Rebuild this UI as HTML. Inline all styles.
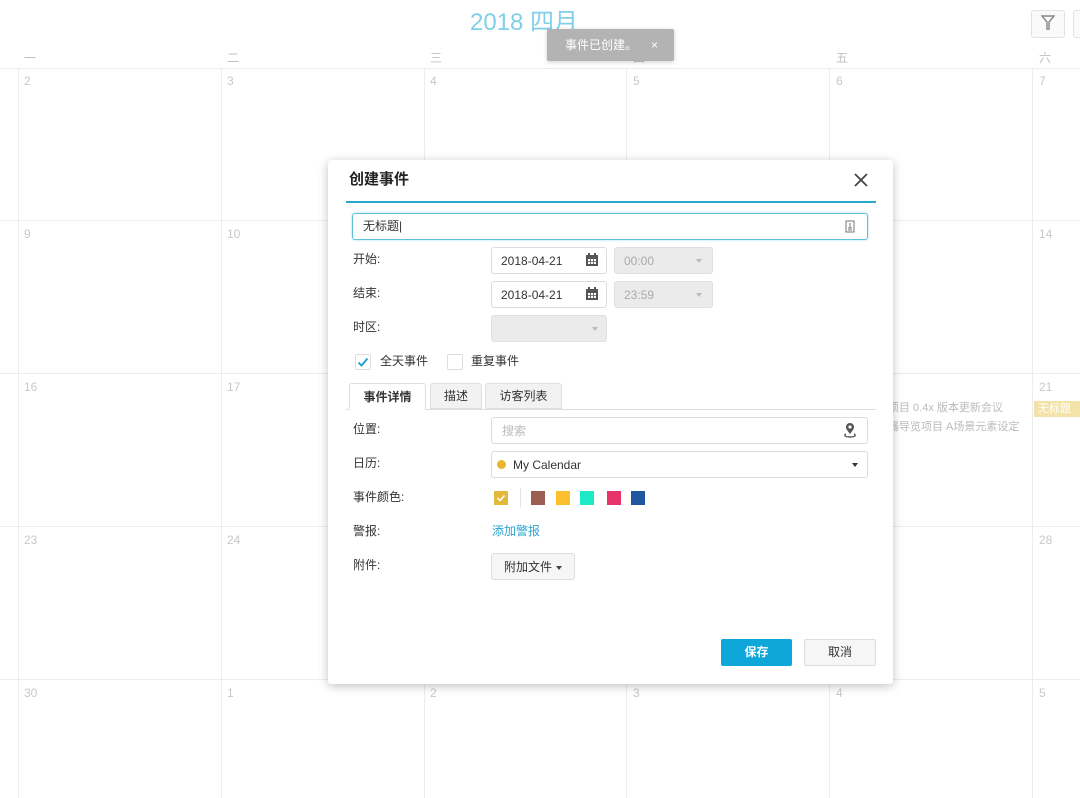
<!DOCTYPE html>
<html><head><meta charset="utf-8"><style>
*{box-sizing:border-box;margin:0;padding:0}
body{width:1080px;height:798px;overflow:hidden;background:#fff;position:relative;font-family:"Liberation Sans","Noto Sans CJK SC",sans-serif;font-size:12px;color:#333;line-height:1.2}
.a{position:absolute}
.vl{position:absolute;top:68px;bottom:0;width:1px;background:#ececec}
.hl{position:absolute;left:0;right:0;height:1px;background:#ececec}
.dn{position:absolute;color:#c8c8c8;font-size:12px}
.wd{position:absolute;top:51px;color:#c0c0c0;font-size:12px}
.lbl{position:absolute;left:353px;font-size:12px;color:#333}
.box{position:absolute;border:1px solid #dcdcdc;border-radius:3px;background:#fff}
.dis{position:absolute;border:1px solid #e0e0e0;border-radius:3px;background:#ebebeb;color:#aaa}
.car{position:absolute;width:0;height:0;border-left:3.5px solid transparent;border-right:3.5px solid transparent;border-top:4px solid #bbb}
.sw{position:absolute;top:491px;width:14px;height:14px}
</style></head><body>
<div class="a" style="left:470px;top:9px;font-size:24px;color:#7fd0e8">2018 四月</div>
<div class="a" style="left:1031px;top:10px;width:34px;height:28px;border:1px solid #e3e3e3;border-radius:3px;background:#fafafa"></div>
<svg class="a" style="left:1041px;top:15px" width="14" height="16" viewBox="0 0 14 16"><path d="M1 1h12L8 7v7H6V7z" fill="none" stroke="#888" stroke-width="1.4"/></svg>
<div class="a" style="left:1073px;top:10px;width:10px;height:28px;border:1px solid #e3e3e3;border-radius:3px;background:#fafafa"></div>
<div class="wd" style="left:24px">一</div><div class="wd" style="left:227px">二</div><div class="wd" style="left:430px">三</div><div class="wd" style="left:633px">四</div><div class="wd" style="left:836px">五</div><div class="wd" style="left:1039px">六</div>
<div class="hl" style="top:68px"></div><div class="hl" style="top:220px"></div><div class="hl" style="top:373px"></div><div class="hl" style="top:526px"></div><div class="hl" style="top:679px"></div>
<div class="vl" style="left:18px"></div><div class="vl" style="left:221px"></div><div class="vl" style="left:424px"></div><div class="vl" style="left:626px"></div><div class="vl" style="left:829px"></div><div class="vl" style="left:1032px"></div>
<div class="dn" style="left:24px;top:74px">2</div><div class="dn" style="left:227px;top:74px">3</div><div class="dn" style="left:430px;top:74px">4</div><div class="dn" style="left:633px;top:74px">5</div><div class="dn" style="left:836px;top:74px">6</div><div class="dn" style="left:1039px;top:74px">7</div>
<div class="dn" style="left:24px;top:227px">9</div><div class="dn" style="left:227px;top:227px">10</div><div class="dn" style="left:1039px;top:227px">14</div>
<div class="dn" style="left:24px;top:380px">16</div><div class="dn" style="left:227px;top:380px">17</div><div class="dn" style="left:1039px;top:380px">21</div>
<div class="dn" style="left:24px;top:533px">23</div><div class="dn" style="left:227px;top:533px">24</div><div class="dn" style="left:1039px;top:533px">28</div>
<div class="dn" style="left:24px;top:686px">30</div><div class="dn" style="left:227px;top:686px">1</div><div class="dn" style="left:430px;top:686px">2</div><div class="dn" style="left:633px;top:686px">3</div><div class="dn" style="left:836px;top:686px">4</div><div class="dn" style="left:1039px;top:686px">5</div>
<div class="a" style="left:888px;top:402px;color:#bbb;font-size:11px">项目 0.4x 版本更新会议</div>
<div class="a" style="left:888px;top:421px;color:#bbb;font-size:11px">器导览项目 A场景元素设定</div>
<div class="a" style="left:1034px;top:401px;width:46px;height:16px;background:#f3e3a8;color:#fff;font-size:11px;padding-left:4px;line-height:16px">无标题</div>
<div class="a" style="left:547px;top:29px;width:127px;height:32px;background:#b3b3b3;border-radius:2px;box-shadow:0 1px 4px rgba(0,0,0,.2);color:#fff;font-size:12px;line-height:32px;padding-left:18px">事件已创建。<span style="margin-left:14px">×</span></div>

<div class="a" style="left:328px;top:160px;width:565px;height:524px;background:#fff;border-radius:3px;box-shadow:0 2px 10px rgba(0,0,0,.25)"></div>
<div class="a" style="left:349px;top:171px;font-size:15px;font-weight:bold;color:#222">创建事件</div>
<svg class="a" style="left:853px;top:172px" width="16" height="16" viewBox="0 0 16 16"><path d="M2 2l12 12M14 2L2 14" stroke="#444" stroke-width="1.8"/></svg>
<div class="a" style="left:346px;top:201px;width:530px;height:2px;background:#28a9cc"></div>
<div class="box" style="left:352px;top:213px;width:516px;height:27px;border-color:#5ec0dd;box-shadow:0 0 2px #9fdcee;padding:5px 10px;font-size:12px">无标题|</div>
<svg class="a" style="left:845px;top:220px" width="10" height="13" viewBox="0 0 10 13"><rect x="1" y="1" width="8" height="11" fill="none" stroke="#777"/><path d="M5 3v5M3 8h4M3 10h4" stroke="#777"/></svg>
<div class="lbl" style="top:252px">开始:</div>
<div class="lbl" style="top:286px">结束:</div>
<div class="lbl" style="top:320px">时区:</div>
<div class="box" style="left:491px;top:247px;width:116px;height:27px;padding:6px 9px">2018-04-21</div>
<div class="box" style="left:491px;top:281px;width:116px;height:27px;padding:6px 9px">2018-04-21</div>
<svg class="a" style="left:585px;top:253px" width="14" height="14" viewBox="0 0 14 14"><rect x="1" y="2" width="12" height="11" fill="#555"/><rect x="3" y="0" width="2" height="3" fill="#555"/><rect x="9" y="0" width="2" height="3" fill="#555"/><rect x="3" y="6" width="8" height="5" fill="#fff"/><path d="M3 8.5h8M5.5 6v5M8.5 6v5" stroke="#555" stroke-width=".8"/></svg>
<svg class="a" style="left:585px;top:287px" width="14" height="14" viewBox="0 0 14 14"><rect x="1" y="2" width="12" height="11" fill="#555"/><rect x="3" y="0" width="2" height="3" fill="#555"/><rect x="9" y="0" width="2" height="3" fill="#555"/><rect x="3" y="6" width="8" height="5" fill="#fff"/><path d="M3 8.5h8M5.5 6v5M8.5 6v5" stroke="#555" stroke-width=".8"/></svg>
<div class="dis" style="left:614px;top:247px;width:99px;height:27px;padding:6px 9px">00:00</div><div class="car" style="left:696px;top:259px"></div>
<div class="dis" style="left:614px;top:281px;width:99px;height:27px;padding:6px 9px">23:59</div><div class="car" style="left:696px;top:293px"></div>
<div class="dis" style="left:491px;top:315px;width:116px;height:27px"></div><div class="car" style="left:592px;top:327px"></div>
<div class="a" style="left:355px;top:354px;width:16px;height:16px;border:1px solid #ddd;border-radius:2px"></div>
<svg class="a" style="left:357px;top:356px" width="12" height="12" viewBox="0 0 12 12"><path d="M1.5 6.5l3 3 6-7" fill="none" stroke="#1a9fd0" stroke-width="1.8"/></svg>
<div class="a" style="left:380px;top:354px">全天事件</div>
<div class="a" style="left:447px;top:354px;width:16px;height:16px;border:1px solid #ddd;border-radius:2px"></div>
<div class="a" style="left:471px;top:354px">重复事件</div>
<div class="a" style="left:346px;top:409px;width:530px;height:1px;background:#ddd"></div>
<div class="a" style="left:349px;top:383px;width:77px;height:27px;background:#fff;border:1px solid #ddd;border-bottom-color:#fff;border-radius:3px 3px 0 0;font-weight:bold;text-align:center;line-height:26px">事件详情</div>
<div class="a" style="left:430px;top:383px;width:52px;height:26px;background:#f2f2f2;border:1px solid #e0e0e0;border-radius:3px 3px 0 0;text-align:center;line-height:25px">描述</div>
<div class="a" style="left:485px;top:383px;width:77px;height:26px;background:#f2f2f2;border:1px solid #e0e0e0;border-radius:3px 3px 0 0;text-align:center;line-height:25px">访客列表</div>
<div class="lbl" style="top:422px">位置:</div>
<div class="lbl" style="top:456px">日历:</div>
<div class="lbl" style="top:490px">事件颜色:</div>
<div class="lbl" style="top:524px">警报:</div>
<div class="lbl" style="top:558px">附件:</div>
<div class="box" style="left:491px;top:417px;width:377px;height:27px;padding:6px 10px;color:#bbb">搜索</div>
<svg class="a" style="left:843px;top:422px" width="14" height="17" viewBox="0 0 14 17"><path d="M7 12C4 8 3 7 3 5a4 4 0 018 0c0 2-1 3-4 7z" fill="#555"/><circle cx="7" cy="5" r="1.6" fill="#fff"/><path d="M3 12c-2 1-2 3 4 3s6-2 4-3" fill="none" stroke="#555" stroke-width="1.4"/></svg>
<div class="box" style="left:491px;top:451px;width:377px;height:27px;padding:6px 21px;font-size:12px">My Calendar</div>
<div class="a" style="left:497px;top:460px;width:9px;height:9px;border-radius:50%;background:#e8b730"></div>
<div class="car" style="left:852px;top:463px;border-top-color:#333"></div>
<div class="sw" style="left:494px;background:#e3b93b"></div>
<svg class="a" style="left:496px;top:493px" width="10" height="10" viewBox="0 0 10 10"><path d="M1.5 5l2.5 2.5 4.5-5" fill="none" stroke="#fff" stroke-width="1.5"/></svg>
<div class="a" style="left:520px;top:488px;width:1px;height:20px;background:#e5e5e5"></div>
<div class="sw" style="left:531px;background:#9c5e50"></div>
<div class="sw" style="left:556px;background:#fbc02d"></div>
<div class="sw" style="left:580px;background:#1de9c7"></div>
<div class="sw" style="left:607px;background:#e8336a"></div>
<div class="sw" style="left:631px;background:#1e56a0"></div>
<div class="a" style="left:492px;top:524px;color:#2aa5d2">添加警报</div>
<div class="a" style="left:491px;top:553px;width:84px;height:27px;background:#f6f6f6;border:1px solid #ddd;border-radius:3px;padding:6px 12px">附加文件</div>
<div class="car" style="left:556px;top:566px;border-top-color:#444"></div>
<div class="a" style="left:721px;top:639px;width:71px;height:27px;background:#0fa6d9;border-radius:2px;color:#fff;font-weight:bold;text-align:center;line-height:27px">保存</div>
<div class="a" style="left:804px;top:639px;width:72px;height:27px;background:#f6f6f6;border:1px solid #ddd;border-radius:2px;text-align:center;line-height:25px">取消</div>
</body></html>
